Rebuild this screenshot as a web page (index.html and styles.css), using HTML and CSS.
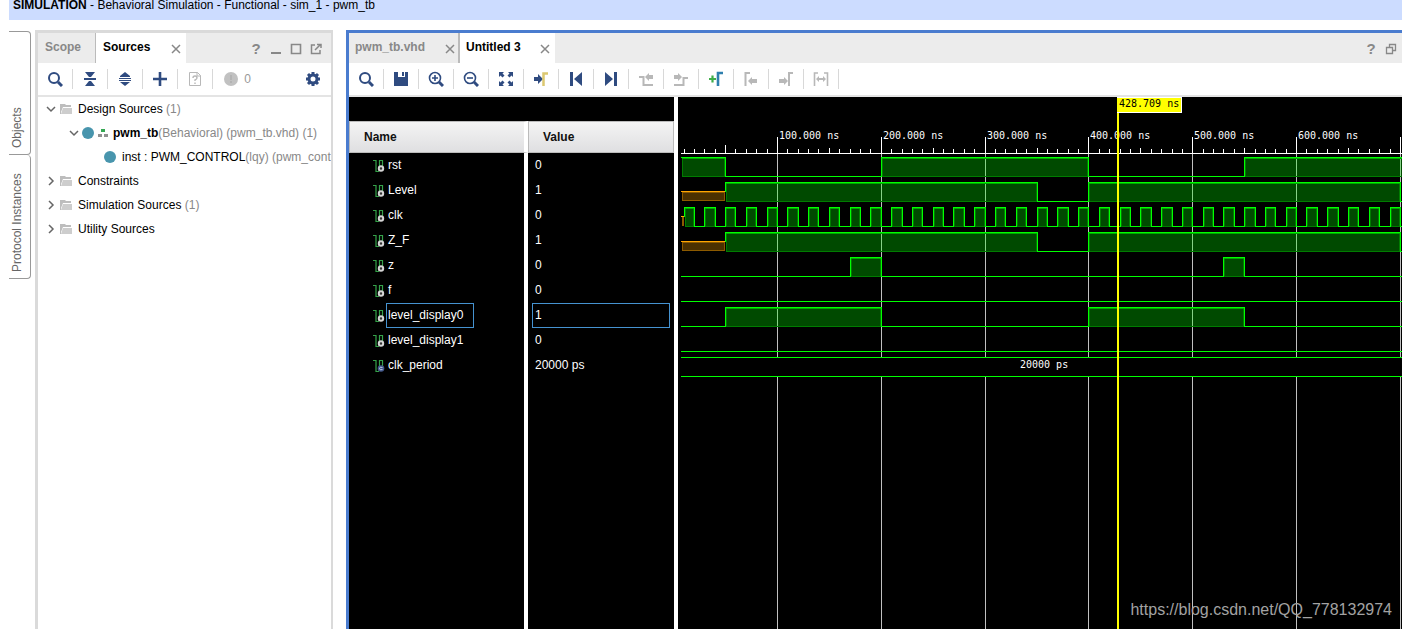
FILE: index.html
```html
<!DOCTYPE html>
<html lang="en">
<head>
<meta charset="utf-8">
<title>Behavioral Simulation - pwm_tb</title>
<link rel="stylesheet" href="styles.css">
</head>
<body>
<svg class="defs" aria-hidden="true">
  <symbol id="i-search" viewBox="0 0 16 16"><circle cx="7" cy="7" r="5" fill="none" stroke="currentColor" stroke-width="2"/><path d="M11 11l4 4" stroke="currentColor" stroke-width="3"/></symbol>
  <symbol id="i-zoomin" viewBox="0 0 16 16"><circle cx="7" cy="7" r="5.5" fill="none" stroke="currentColor" stroke-width="1.6"/><path d="M11 11l4 4" stroke="currentColor" stroke-width="3"/><path d="M4 7h6M7 4v6" stroke="currentColor" stroke-width="1.6"/></symbol>
  <symbol id="i-zoomout" viewBox="0 0 16 16"><circle cx="7" cy="7" r="5.5" fill="none" stroke="currentColor" stroke-width="1.6"/><path d="M11 11l4 4" stroke="currentColor" stroke-width="3"/><path d="M4 7h6" stroke="currentColor" stroke-width="1.6"/></symbol>
  <symbol id="i-collapse" viewBox="0 0 16 16"><path d="M3 1h10L9 6H7zM2 7h12v2H2zM3 15h10l-4-5H7z" fill="currentColor"/></symbol>
  <symbol id="i-expand" viewBox="0 0 16 16"><path d="M8 1l5 4v1H3V5zM2 7h12v1H2zM2 9h12v1H2zM8 15l5-4H3z" fill="currentColor"/></symbol>
  <symbol id="i-plus" viewBox="0 0 16 16"><path d="M6.700 1h2.600v5.700H15v2.600H9.300V15H6.700V9.300H1V6.700h5.700z" fill="currentColor"/></symbol>
  <symbol id="i-doc" viewBox="0 0 16 16"><path d="M2.500 1.500h8l3 3v10h-11z" fill="none" stroke="currentColor"/><path d="M10 1v4h4" fill="none" stroke="currentColor"/><path d="M6 7q0-2 2-2t2 2q0 1-2 2v1M8 11.500v1.500" fill="none" stroke="currentColor" stroke-width="1.4"/></symbol>
  <symbol id="i-dot" viewBox="0 0 16 16"><circle cx="8" cy="8" r="7" fill="#c1c1c1"/><path d="M8 4v5M8 10v2" stroke="#b3b3b3" stroke-width="2"/></symbol>
  <symbol id="i-gear" viewBox="0 0 16 16"><circle cx="8" cy="8" r="4" fill="none" stroke="currentColor" stroke-width="3"/><path d="M8 1v3M8 12v3M1 8h3M12 8h3M3 3l2 2M11 11l2 2M3 13l2-2M11 5l2-2" stroke="currentColor" stroke-width="3"/></symbol>
  <symbol id="i-save" viewBox="0 0 16 16"><path d="M1 1h4v5h7V1h3v14H1zM9 1h2v4H9z" fill="currentColor"/></symbol>
  <symbol id="i-fit" viewBox="0 0 16 16"><path d="M1 1h5L4.500 2.500 6.500 4.500 4.500 6.500 2.500 4.500 1 6zM15 1v5l-1.500-1.500-2 2-2-2 2-2L10 1zM1 15v-5l1.500 1.500 2-2 2 2-2 2L6 15zM15 15h-5l1.500-1.500-2-2 2-2 2 2L15 10z" fill="currentColor"/></symbol>
  <symbol id="i-goto" viewBox="0 0 16 16"><path d="M1 6h4V3l5 5-5 5v-3H1z" fill="currentColor"/><path d="M10.500 15V2.500H15" fill="none" stroke="#dcc870" stroke-width="2.500"/></symbol>
  <symbol id="i-first" viewBox="0 0 16 16"><path d="M2 1h3v14H2zM14 1v14L6 8z" fill="currentColor"/></symbol>
  <symbol id="i-last" viewBox="0 0 16 16"><path d="M11 1h3v14h-3zM2 1v14l8-7z" fill="currentColor"/></symbol>
  <symbol id="i-prevtr" viewBox="0 0 16 16"><path d="M1 6h4.500v8H15" fill="none" stroke="currentColor" stroke-width="2"/><path d="M7 6l4-4v2h4v4h-4v2z" fill="currentColor"/></symbol>
  <symbol id="i-nexttr" viewBox="0 0 16 16"><path d="M1 14h9.500V7H15" fill="none" stroke="currentColor" stroke-width="2"/><path d="M9 6L5 2v2H1v4h4v2z" fill="currentColor"/></symbol>
  <symbol id="i-addmark" viewBox="0 0 16 16"><path d="M1 8h7M4.500 4.500v7" stroke="#3fae49" stroke-width="2.200"/><path d="M10 15V2h5" fill="none" stroke="#2e7fae" stroke-width="2.600"/></symbol>
  <symbol id="i-prevmk" viewBox="0 0 16 16"><path d="M2.500 15V2H7" fill="none" stroke="currentColor" stroke-width="2"/><path d="M5 10l4-4v2h5v4H9v2z" fill="currentColor"/></symbol>
  <symbol id="i-nextmk" viewBox="0 0 16 16"><path d="M11 15V2h4" fill="none" stroke="currentColor" stroke-width="2"/><path d="M10 10L6 6v2H1v4h5v2z" fill="currentColor"/></symbol>
  <symbol id="i-swap" viewBox="0 0 16 16"><path d="M1.500 15V2H5M14.500 15V2H11" fill="none" stroke="currentColor" stroke-width="1.600"/><path d="M3 8l3-3v2h4V5l3 3-3 3V9H6v2z" fill="currentColor"/></symbol>
  <symbol id="i-folder" viewBox="0 0 12 12"><path d="M0 1h5l1 1h5v2H3L1 9v2H0z" fill="#bdbdbd"/><path d="M3 5h9v6H1z" fill="#cdcdcd"/></symbol>
  <symbol id="i-open" viewBox="0 0 10 10"><path d="M1 3l4 4 4-4" fill="none" stroke="#666" stroke-width="1.500"/></symbol>
  <symbol id="i-shut" viewBox="0 0 10 10"><path d="M3 1l4 4-4 4" fill="none" stroke="#666" stroke-width="1.500"/></symbol>
  <symbol id="i-mod" viewBox="0 0 12 12"><circle cx="6" cy="6" r="6" fill="#4895ad"/></symbol>
  <symbol id="i-top" viewBox="0 0 12 12"><path d="M4 2h4v3H4z" fill="#35a853"/><path d="M1 7h4v3H1zM7 7h4v3H7z" fill="#909090"/></symbol>
  <symbol id="i-sig" viewBox="0 0 12 12"><path d="M0 .5h3v11h3M6.500 8V.5h3V6" fill="none" stroke="#35a34a" stroke-width="1.200"/><circle cx="8" cy="8.500" r="2.200" fill="#333" stroke="#d5d5d5" stroke-width="2"/></symbol>
  <symbol id="i-const" viewBox="0 0 12 12"><path d="M0 .5h3v11h3M6.500 8V.5h3V6" fill="none" stroke="#35a34a" stroke-width="1.200"/><circle cx="8" cy="8.500" r="3.300" fill="#44598c"/><path d="M9.500 7.500q-3-1-3 1t3 1" fill="none" stroke="#bcc8e6"/></symbol>
  <symbol id="i-close" viewBox="0 0 10 10"><path d="M1 1l8 8M9 1L1 9" stroke="#888" stroke-width="1.500"/></symbol>
  <symbol id="i-min" viewBox="0 0 12 12"><path d="M1 10h10" stroke="#888" stroke-width="2"/></symbol>
  <symbol id="i-max" viewBox="0 0 12 12"><path d="M1.500 1.500h9v9h-9z" fill="none" stroke="#888" stroke-width="1.600"/></symbol>
  <symbol id="i-pop" viewBox="0 0 12 12"><path d="M5 2H1.500v8.500H10V7" fill="none" stroke="#888" stroke-width="1.500"/><path d="M5 7l5-5M7 1.500h4V5" fill="none" stroke="#888" stroke-width="1.500"/></symbol>
  <symbol id="i-restore" viewBox="0 0 12 12"><path d="M1.500 4.500h6v6h-6zM4.500 4V1.500h6v6H8" fill="none" stroke="#888" stroke-width="1.300"/></symbol>
</svg>

<header class="banner"><b>SIMULATION</b> - Behavioral Simulation - Functional - sim_1 - pwm_tb</header>

<main class="workspace">
  <nav class="side" aria-label="Docked views">
    <button class="objects">Objects</button>
    <button class="protocol">Protocol Instances</button>
  </nav>

  <section class="sources" aria-label="Sources">
    <div class="tabs">
      <button class="tab tab-scope">Scope</button>
      <div class="tab active tab-sources"><button>Sources</button><button aria-label="Close Sources"><svg class="s10"><use href="#i-close"/></svg></button></div>
      <div class="winctl">
        <button class="help">?</button>
        <button aria-label="Minimize"><svg class="s12"><use href="#i-min"/></svg></button>
        <button aria-label="Maximize"><svg class="s12"><use href="#i-max"/></svg></button>
        <button aria-label="Float"><svg class="s12"><use href="#i-pop"/></svg></button>
      </div>
    </div>
    <div class="toolbar">
      <button class="tool" aria-label="Search"><svg><use href="#i-search"/></svg></button>
      <button class="tool" aria-label="Collapse all"><svg><use href="#i-collapse"/></svg></button>
      <button class="tool" aria-label="Expand all"><svg><use href="#i-expand"/></svg></button>
      <button class="tool" aria-label="Add sources"><svg><use href="#i-plus"/></svg></button>
      <button class="tool off" aria-label="Missing files"><svg><use href="#i-doc"/></svg></button>
      <button class="tool count"><svg><use href="#i-dot"/></svg>0</button>
      <button class="tool end" aria-label="Settings"><svg><use href="#i-gear"/></svg></button>
    </div>
    <ul class="tree">
      <li><div class="node"><svg class="s10"><use href="#i-open"/></svg><svg class="s12"><use href="#i-folder"/></svg><span>Design Sources <i>(1)</i></span></div>
        <ul>
          <li><div class="node mod"><svg class="s10"><use href="#i-open"/></svg><svg class="s12"><use href="#i-mod"/></svg><svg class="s12"><use href="#i-top"/></svg><span><b>pwm_tb</b><i>(Behavioral) (pwm_tb.vhd) (1)</i></span></div>
            <ul><li><div class="node inst"><svg class="s12"><use href="#i-mod"/></svg><span>inst : PWM_CONTROL<i>(lqy) (pwm_cont</i></span></div></li></ul>
          </li>
        </ul>
      </li>
      <li><div class="node"><svg class="s10"><use href="#i-shut"/></svg><svg class="s12"><use href="#i-folder"/></svg><span>Constraints</span></div></li>
      <li><div class="node"><svg class="s10"><use href="#i-shut"/></svg><svg class="s12"><use href="#i-folder"/></svg><span>Simulation Sources <i>(1)</i></span></div></li>
      <li><div class="node"><svg class="s10"><use href="#i-shut"/></svg><svg class="s12"><use href="#i-folder"/></svg><span>Utility Sources</span></div></li>
    </ul>
  </section>

  <section class="editor" aria-label="Waveform">
    <div class="tabs">
      <div class="tab tab-file"><button>pwm_tb.vhd</button><button aria-label="Close pwm_tb.vhd"><svg class="s10"><use href="#i-close"/></svg></button></div>
      <div class="tab active tab-wave"><button>Untitled 3</button><button aria-label="Close Untitled 3"><svg class="s10"><use href="#i-close"/></svg></button></div>
      <div class="winctl">
        <button class="help">?</button>
        <button aria-label="Restore"><svg class="s12"><use href="#i-restore"/></svg></button>
      </div>
    </div>
    <div class="toolbar">
      <button class="tool" aria-label="Search"><svg><use href="#i-search"/></svg></button>
      <button class="tool" aria-label="Save"><svg><use href="#i-save"/></svg></button>
      <button class="tool" aria-label="Zoom in"><svg><use href="#i-zoomin"/></svg></button>
      <button class="tool" aria-label="Zoom out"><svg><use href="#i-zoomout"/></svg></button>
      <button class="tool" aria-label="Zoom fit"><svg><use href="#i-fit"/></svg></button>
      <button class="tool" aria-label="Go to cursor"><svg><use href="#i-goto"/></svg></button>
      <button class="tool" aria-label="Go to start"><svg><use href="#i-first"/></svg></button>
      <button class="tool" aria-label="Go to end"><svg><use href="#i-last"/></svg></button>
      <button class="tool off" aria-label="Previous transition"><svg><use href="#i-prevtr"/></svg></button>
      <button class="tool off" aria-label="Next transition"><svg><use href="#i-nexttr"/></svg></button>
      <button class="tool" aria-label="Add marker"><svg><use href="#i-addmark"/></svg></button>
      <button class="tool off" aria-label="Previous marker"><svg><use href="#i-prevmk"/></svg></button>
      <button class="tool off" aria-label="Next marker"><svg><use href="#i-nextmk"/></svg></button>
      <button class="tool off" aria-label="Swap cursors"><svg><use href="#i-swap"/></svg></button>
      <button class="tool edge" aria-label="Settings"><svg><use href="#i-gear"/></svg></button>
    </div>
    <div class="viewer">
      <div class="signals">
        <table>
          <thead><tr><th>Name</th><th>Value</th></tr></thead>
          <tbody>
            <tr><td><svg class="s12"><use href="#i-sig"/></svg><span>rst</span></td><td><span>0</span></td></tr>
            <tr><td><svg class="s12"><use href="#i-sig"/></svg><span>Level</span></td><td><span>1</span></td></tr>
            <tr><td><svg class="s12"><use href="#i-sig"/></svg><span>clk</span></td><td><span>0</span></td></tr>
            <tr><td><svg class="s12"><use href="#i-sig"/></svg><span>Z_F</span></td><td><span>1</span></td></tr>
            <tr><td><svg class="s12"><use href="#i-sig"/></svg><span>z</span></td><td><span>0</span></td></tr>
            <tr><td><svg class="s12"><use href="#i-sig"/></svg><span>f</span></td><td><span>0</span></td></tr>
            <tr class="selected"><td><svg class="s12"><use href="#i-sig"/></svg><span>level_display0</span></td><td><span>1</span></td></tr>
            <tr><td><svg class="s12"><use href="#i-sig"/></svg><span>level_display1</span></td><td><span>0</span></td></tr>
            <tr><td><svg class="s12"><use href="#i-const"/></svg><span>clk_period</span></td><td><span>20000 ps</span></td></tr>
          </tbody>
        </table>
      </div>
      <div class="wave">
        <svg id="wave" role="img" aria-label="Signal waveforms"></svg>
        <div class="watermark">https://blog.csdn.net/QQ_778132974</div>
      </div>
    </div>
  </section>
</main>
<script src="wave.js"></script>
</body>
</html>
```

FILE: styles.css
```css
* { box-sizing: border-box; }

body {
  margin: 0;
  height: 100vh;
  display: flex;
  flex-direction: column;
  overflow: hidden;
  background: #fff;
  color: #000;
  font: 12px/16px "Liberation Sans", Arial, sans-serif;
}

button {
  margin: 0;
  padding: 0;
  border: 0;
  background: none;
  color: inherit;
  font: inherit;
  display: flex;
  align-items: center;
}

svg { display: block; flex: none; }
.defs { position: absolute; width: 0; height: 0; }
.s10 { width: 10px; height: 10px; }
.s12 { width: 12px; height: 12px; }

.banner {
  height: 20px;
  margin-left: 9px;
  padding: 0 4px;
  background: #ccdcff;
  line-height: 10px;
  flex: none;
}

.workspace {
  flex: 1;
  min-height: 0;
  display: flex;
  padding: 10px 0 0 9px;
}

/* docked side tabs */
.side { width: 22px; flex: none; padding-top: 1px; margin-right: 4px; }
.side button {
  width: 22px;
  writing-mode: vertical-rl;
  transform: rotate(180deg);
  color: #666;
  border: 1px solid #999;
  border-right: 0;
  border-radius: 4px 0 0 4px;
  padding-left: 6px;
}
.side .objects { height: 124px; padding-top: 6px; }
.side .protocol { height: 124px; padding-top: 6px; border-bottom: 0; }

/* panels */
.sources {
  width: 298px;
  flex: none;
  margin-right: 13px;
  border: solid #dadada;
  border-width: 3px 2px 0 3px;
  overflow: hidden;
}
.editor {
  flex: 1;
  min-width: 0;
  display: flex;
  flex-direction: column;
  border: 3px solid #4a7ccf;
  border-width: 3px 0 0 3px;
}

.tabs { display: flex; height: 30px; background: #ececec; flex: none; }
.tab {
  display: flex;
  align-items: center;
  justify-content: space-between;
  height: 30px;
  padding: 0 5px 2px 7px;
  color: #888;
  font-weight: bold;
}
.tab svg { margin-top: 4px; }
.active { background: #fff; color: #000; }
.tab-scope { width: 58px; border-right: 1px solid #bbb; }
.tab-sources { width: 90px; }
.tab-file { width: 111px; padding-left: 6px; border-right: 2px solid #bbb; padding-right: 3px; }
.tab-wave { width: 95px; padding-left: 6px; }
.winctl { margin-left: auto; display: flex; align-items: center; gap: 8px; padding: 2px 9px 0 0; }
.editor .winctl { padding-right: 5px; }
.help { width: 12px; justify-content: center; color: #888; font-size: 15px; font-weight: bold; }

.toolbar {
  display: flex;
  align-items: center;
  height: 34px;
  border-bottom: 2px solid #e4e4e4;
  color: #2f4b80;
  flex: none;
  overflow: hidden;
}
.tool {
  width: 35px;
  height: 20px;
  flex: none;
  justify-content: center;
  border-right: 1px solid #d8d8d8;
}
.tool svg { width: 16px; height: 16px; }
.off { color: #b8b8b8; }
.count { width: 48px; gap: 5px; color: #999; border: 0; }
.end { margin: 0 1px 0 auto; border: 0; }
.edge { width: 16px; margin: 0 -15px 0 auto; border: 0; }

/* source tree */
.tree, .tree ul { list-style: none; margin: 0; padding: 0; }
.node { display: flex; align-items: center; gap: 4px; height: 24px; padding-left: 8px; white-space: nowrap; }
.node span { padding-left: 2px; }
.mod { padding-left: 31px; gap: 3px; }
.mod span { padding-left: 1px; }
.inst { padding-left: 66px; }
.tree i { font-style: normal; color: #888; }

/* waveform viewer */
.viewer { flex: 1; min-height: 0; display: flex; background: #000; color: #fff; }
.signals {
  width: 329px;
  flex: none;
  padding-top: 24px;
  border-right: 4px solid #fff;
  background: linear-gradient(#fff, #fff) 175px 24px / 4px 100% no-repeat;
}
table { width: 100%; border-collapse: separate; border-spacing: 0; table-layout: fixed; }
th {
  height: 32px;
  padding: 0 0 0 14px;
  border: 1px solid #bbb;
  background: linear-gradient(#f4f4f4, #dfdfe1) padding-box;
  color: #111;
  text-align: left;
}
th:first-child { width: 179px; border-right: 4px solid #fff; }
td { height: 25px; padding: 0 4px; }
td:first-child { display: flex; align-items: center; gap: 1px; padding: 0 0 0 24px; }
td span { display: block; height: 25px; line-height: 23px; padding: 0 2px; border: 1px solid transparent; }
td:first-child span { padding: 0 10px 0 1px; }
.selected span { border-color: #4592d0; }

.wave { flex: 1; min-width: 0; position: relative; overflow: hidden; }
.wave svg { width: 100%; height: 100%; }
.wave text { font: 10px "DejaVu Sans Mono", monospace; fill: #fff; }
.wave .cursor-text { fill: #000; }
.watermark {
  position: absolute;
  right: 10px;
  bottom: 9px;
  color: #a3a3a3;
  font-size: 16px;
  line-height: 20px;
}
```

FILE: wave.js
```js
const canvas = document.getElementById('wave');
const BUS = 260, LEFT = 3;
const PX = 1.0383, ORIGIN = -4.38, LABEL = 62;
const at = t => Math.max(LEFT, Math.floor(ORIGIN + PX * t));
const rect = (x, y, w, h, fill) => `<rect x="${x}" y="${y}" width="${w}" height="${h}" fill="${fill}"/>`;

function draw() {
  const width = canvas.clientWidth;
  const END = Math.ceil((width - ORIGIN) / PX) + 20;

  const clock = [];
  for (let t = 10; t < END; t += 20) clock.push([t, t + 10]);

  // high intervals in ns; x is the time until which the value is unknown
  const signals = [
    { high: [[0, 50], [200, 400], [550, END]] },
    { x: 50, high: [[50, 350], [400, 700]] },
    { x: 10, high: clock },
    { x: 50, high: [[50, 350], [400, 700]] },
    { high: [[170, 200], [530, 550]] },
    { high: [] },
    { high: [[50, 200], [400, 550]] },
    { high: [] }
  ];

  let out = '';
  for (let t = 100; t < END; t += 100) {
    out += rect(at(t), 57, 1, BUS - 57, '#c0c0c0') + rect(at(t), BUS + 20, 1, 4000, '#c0c0c0');
  }

  signals.forEach((s, i) => {
    const top = 60 + i * 25, low = top + 19;
    let from = LEFT;
    if (s.x) {
      const w = at(s.x) - LEFT;
      out += rect(LEFT + 1, top + 10, w - 1, 9, '#8c5a00');
      if (w > 4) out += rect(LEFT + 2, top + 11, w - 3, 7, '#4b3000');
      out += rect(LEFT, top + 9, w, 1, '#ffa500');
      from = at(s.x);
    }
    s.high.forEach(([a, b]) => {
      const l = at(a), r = at(b), w = r - l;
      if (l > from) out += rect(from, low, l - from, 1, '#00ff00');
      out += rect(l + 1, top + 1, w - 1, 19, 'rgba(0,255,0,.29)');
      out += rect(l + 1, top + 1, w - 1, 1, '#00a800');
      out += rect(l + 1, low, w - 1, 1, '#007c00');
      out += rect(l + 1, top + 2, 1, 17, '#007c00') + rect(r - 1, top + 2, 1, 17, '#007c00');
      out += rect(l, top, w + 1, 1, '#00ff00') + rect(r, top, 1, 20, '#00ff00');
      if (a > 0) out += rect(l, top, 1, a === s.x ? 10 : 20, '#00ff00');
      from = r;
    });
    out += rect(from, low, 4000, 1, '#00ff00');
  });

  out += rect(LEFT, BUS, 4000, 1, '#00ff00') + rect(LEFT, BUS + 19, 4000, 1, '#00ff00');
  out += `<text x="342" y="${BUS + 11}">20000 ps</text>`;

  out += rect(LEFT, 56, 4000, 1, '#fff');
  for (let t = 10; t < END; t += 10) {
    const h = t % 100 === 0 ? 16 : t === 50 ? 8 : t % 50 === 0 ? 5 : 4;
    out += rect(at(t), 56 - h, 1, h, '#fff');
  }
  for (let t = 100; at(t) + LABEL < width; t += 100) {
    out += `<text x="${at(t) + 2}" y="42">${t}.000 ns</text>`;
  }

  out += rect(439, 0, 2, 4000, '#ffff00') + rect(439, 0, 65, 16, '#fff') + rect(439, 1, 64, 14, '#ffff00');
  out += '<text class="cursor-text" x="441" y="10">428.709 ns</text>';
  canvas.innerHTML = out;
}

draw();
window.addEventListener('resize', draw);
```
